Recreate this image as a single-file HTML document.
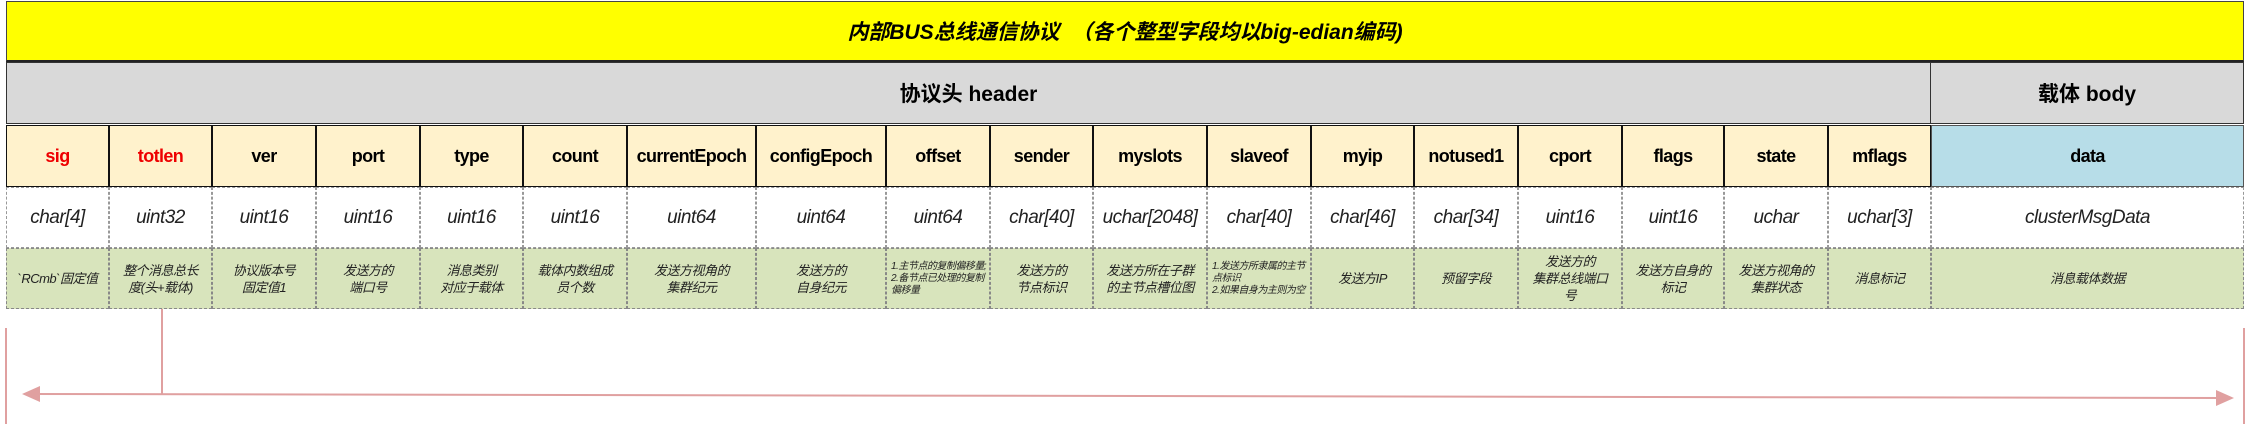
<!DOCTYPE html>
<html><head><meta charset="utf-8"><style>
*{margin:0;padding:0;box-sizing:border-box}
body{width:2250px;height:424px;background:#fff;position:relative;overflow:hidden;font-family:"Liberation Sans Narrow","Liberation Sans","Noto Sans CJK SC",sans-serif;color:#000}
.a{position:absolute;display:flex;align-items:center;justify-content:center;text-align:center}
.t{left:6px;top:1px;width:2238px;height:61px;background:#ff0;border:1px solid #444;border-bottom:2px solid #222;font-weight:bold;font-style:italic;font-size:21px}
.g{top:62px;height:62px;background:#d9d9d9;border:1.5px solid #333;font-weight:bold;font-size:21px}
.h{top:125px;height:62px;background:#fff2cc;border:1.5px solid #111;font-weight:bold;font-size:18px;letter-spacing:-0.6px}
.y{top:187px;height:61px;border:1px dashed #999;font-style:italic;font-size:19px;color:#222;letter-spacing:-0.5px}
.d{top:248px;height:61px;background:#d8e4bc;border:1px dashed #888;font-style:italic;font-size:13px;line-height:17px;color:#222;letter-spacing:-0.5px}
.s{font-size:10px;line-height:12px;text-align:left;justify-content:flex-start;padding-left:4px}
.r{color:#e00}
</style></head><body>
<div class="a t">内部BUS总线通信协议 &nbsp;（各个整型字段均以big-edian编码)</div>
<div class="a g" style="left:6px;width:1925px">协议头 header</div>
<div class="a g" style="left:1930px;width:314px">载体 body</div>

<div class="a h r" style="left:6px;width:103px">sig</div>
<div class="a h r" style="left:109px;width:103px">totlen</div>
<div class="a h" style="left:212px;width:104px">ver</div>
<div class="a h" style="left:316px;width:104px">port</div>
<div class="a h" style="left:420px;width:103px">type</div>
<div class="a h" style="left:523px;width:104px">count</div>
<div class="a h" style="left:627px;width:129px">currentEpoch</div>
<div class="a h" style="left:756px;width:130px">configEpoch</div>
<div class="a h" style="left:886px;width:104px">offset</div>
<div class="a h" style="left:990px;width:103px">sender</div>
<div class="a h" style="left:1093px;width:114px">myslots</div>
<div class="a h" style="left:1207px;width:104px">slaveof</div>
<div class="a h" style="left:1311px;width:103px">myip</div>
<div class="a h" style="left:1414px;width:104px">notused1</div>
<div class="a h" style="left:1518px;width:104px">cport</div>
<div class="a h" style="left:1622px;width:102px">flags</div>
<div class="a h" style="left:1724px;width:104px">state</div>
<div class="a h" style="left:1828px;width:103px">mflags</div>
<div class="a h" style="left:1931px;width:313px;background:#b7dde8;border-color:#555">data</div>

<div class="a y" style="left:6px;width:103px">char[4]</div>
<div class="a y" style="left:109px;width:103px">uint32</div>
<div class="a y" style="left:212px;width:104px">uint16</div>
<div class="a y" style="left:316px;width:104px">uint16</div>
<div class="a y" style="left:420px;width:103px">uint16</div>
<div class="a y" style="left:523px;width:104px">uint16</div>
<div class="a y" style="left:627px;width:129px">uint64</div>
<div class="a y" style="left:756px;width:130px">uint64</div>
<div class="a y" style="left:886px;width:104px">uint64</div>
<div class="a y" style="left:990px;width:103px">char[40]</div>
<div class="a y" style="left:1093px;width:114px">uchar[2048]</div>
<div class="a y" style="left:1207px;width:104px">char[40]</div>
<div class="a y" style="left:1311px;width:103px">char[46]</div>
<div class="a y" style="left:1414px;width:104px">char[34]</div>
<div class="a y" style="left:1518px;width:104px">uint16</div>
<div class="a y" style="left:1622px;width:102px">uint16</div>
<div class="a y" style="left:1724px;width:104px">uchar</div>
<div class="a y" style="left:1828px;width:103px">uchar[3]</div>
<div class="a y" style="left:1931px;width:313px">clusterMsgData</div>

<div class="a d" style="left:6px;width:103px">`RCmb`固定值</div>
<div class="a d" style="left:109px;width:103px">整个消息总长<br>度(头+载体)</div>
<div class="a d" style="left:212px;width:104px">协议版本号<br>固定值1</div>
<div class="a d" style="left:316px;width:104px">发送方的<br>端口号</div>
<div class="a d" style="left:420px;width:103px">消息类别<br>对应于载体</div>
<div class="a d" style="left:523px;width:104px">载体内数组成<br>员个数</div>
<div class="a d" style="left:627px;width:129px">发送方视角的<br>集群纪元</div>
<div class="a d" style="left:756px;width:130px">发送方的<br>自身纪元</div>
<div class="a d s" style="left:886px;width:104px">1.主节点的复制偏移量;<br>2.备节点已处理的复制偏移量</div>
<div class="a d" style="left:990px;width:103px">发送方的<br>节点标识</div>
<div class="a d" style="left:1093px;width:114px">发送方所在子群<br>的主节点槽位图</div>
<div class="a d s" style="left:1207px;width:104px">1.发送方所隶属的主节点标识<br>2.如果自身为主则为空</div>
<div class="a d" style="left:1311px;width:103px">发送方IP</div>
<div class="a d" style="left:1414px;width:104px">预留字段</div>
<div class="a d" style="left:1518px;width:104px">发送方的<br>集群总线端口<br>号</div>
<div class="a d" style="left:1622px;width:102px">发送方自身的<br>标记</div>
<div class="a d" style="left:1724px;width:104px">发送方视角的<br>集群状态</div>
<div class="a d" style="left:1828px;width:103px">消息标记</div>
<div class="a d" style="left:1931px;width:313px">消息载体数据</div>

<svg style="position:absolute;left:0;top:0" width="2250" height="424">
<g stroke="#e0a0a0" stroke-width="2" fill="none">
<line x1="6" y1="328" x2="6" y2="424"/>
<line x1="2244" y1="328" x2="2244" y2="424"/>
<line x1="162" y1="309" x2="162" y2="394"/>
<line x1="30" y1="394" x2="2222" y2="398"/>
</g>
<polygon points="22,394 40,386 40,402" fill="#e0a0a0"/>
<polygon points="2234,398 2216,390 2216,406" fill="#e0a0a0"/>
</svg>
</body></html>
